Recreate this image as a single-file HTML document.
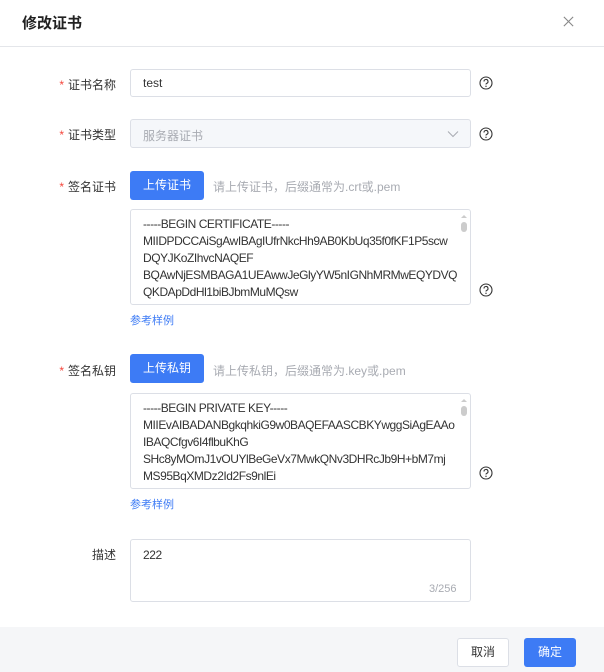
<!DOCTYPE html>
<html><head><meta charset="utf-8"><style>
*{box-sizing:border-box;margin:0;padding:0}
body{width:604px;height:672px;background:#fff;font-family:"Liberation Sans","Noto Sans CJK SC",sans-serif;font-size:12px;color:#333;position:relative;overflow:hidden}
.abs{position:absolute}
.title{left:22px;top:12px;font-size:15px;font-weight:bold;color:#222}
.close{left:562px;top:15px;width:13px;height:13px}
.hr{left:0;top:46px;width:604px;height:1px;background:#e4e6ea}
.lbl{width:116px;left:0;text-align:right;font-size:12px;color:#333}
.lbl b{color:#f5463c;font-weight:normal;margin-right:4px}
.inp{left:130px;width:341px;border:1px solid #dcdfe6;border-radius:3px;background:#fff}
.q{left:479px;width:14px;height:14px}
.btn{left:130px;width:74px;height:29px;background:#3d7bf5;color:#fff;border-radius:3px;text-align:center;line-height:29px;font-size:12px}
.hint{left:213px;color:#a8abb2;font-size:12px}
.ta{padding:6px 12px 0 12px;line-height:17px;font-size:12px;letter-spacing:-0.45px;color:#333;overflow:hidden;white-space:nowrap}
.link{left:130px;color:#3d7bf5;font-size:11px}
.sb{position:absolute;right:1px;top:1px;width:10px;bottom:14px}
.foot{left:0;top:627px;width:604px;height:45px;background:#f5f6f8}
</style></head><body>
<div class="abs title">修改证书</div>
<svg class="abs close" viewBox="0 0 14 14"><path d="M2 2L12 12M12 2L2 12" stroke="#888" stroke-width="1.2"/></svg>
<div class="abs hr"></div>

<div class="abs lbl" style="top:76px"><b>*</b>证书名称</div>
<div class="abs inp" style="top:69px;height:28px;padding:6px 12px">test</div>
<svg class="abs q" style="top:76px" viewBox="0 0 14 14"><circle cx="7" cy="7" r="6" fill="none" stroke="#333" stroke-width="1.1"/><path d="M5 5.5a2 2 0 1 1 2.6 1.9c-.5.2-.6.5-.6 1.1" fill="none" stroke="#333" stroke-width="1.1"/><circle cx="7" cy="10.3" r=".7" fill="#333"/></svg>

<div class="abs lbl" style="top:126px"><b>*</b>证书类型</div>
<div class="abs inp" style="top:119px;height:29px;background:#f5f7fa;padding:7px 12px;color:#a8abb2">服务器证书</div>
<svg class="abs" style="left:447px;top:130px" width="12" height="8" viewBox="0 0 12 8"><path d="M1 1.5L6 6.5L11 1.5" fill="none" stroke="#a8abb2" stroke-width="1"/></svg>
<svg class="abs q" style="top:127px" viewBox="0 0 14 14"><circle cx="7" cy="7" r="6" fill="none" stroke="#333" stroke-width="1.1"/><path d="M5 5.5a2 2 0 1 1 2.6 1.9c-.5.2-.6.5-.6 1.1" fill="none" stroke="#333" stroke-width="1.1"/><circle cx="7" cy="10.3" r=".7" fill="#333"/></svg>

<div class="abs lbl" style="top:178px"><b>*</b>签名证书</div>
<div class="abs btn" style="top:171px">上传证书</div>
<div class="abs hint" style="top:178px">请上传证书，后缀通常为.crt或.pem</div>
<div class="abs inp ta" style="top:209px;height:96px">-----BEGIN CERTIFICATE-----<br>MIIDPDCCAiSgAwIBAgIUfrNkcHh9AB0KbUq35f0fKF1P5scw<br>DQYJKoZIhvcNAQEF<br>BQAwNjESMBAGA1UEAwwJeGlyYW5nIGNhMRMwEQYDVQ<br>QKDApDdHl1biBJbmMuMQsw<br>CQYDVQQGEwJDTjAeFw0yNTA4MjYwNjA5MDBaFw0yNjA4<div class="sb"><div style="margin:4px auto 0;width:0;border:3px solid transparent;border-bottom-color:#ccc;border-top:0"></div><div style="margin:4px auto;width:6px;height:10px;background:#ccc;border-radius:3px"></div></div></div>
<svg class="abs q" style="top:283px" viewBox="0 0 14 14"><circle cx="7" cy="7" r="6" fill="none" stroke="#333" stroke-width="1.1"/><path d="M5 5.5a2 2 0 1 1 2.6 1.9c-.5.2-.6.5-.6 1.1" fill="none" stroke="#333" stroke-width="1.1"/><circle cx="7" cy="10.3" r=".7" fill="#333"/></svg>
<div class="abs link" style="top:312px">参考样例</div>

<div class="abs lbl" style="top:362px"><b>*</b>签名私钥</div>
<div class="abs btn" style="top:354px">上传私钥</div>
<div class="abs hint" style="top:362px">请上传私钥，后缀通常为.key或.pem</div>
<div class="abs inp ta" style="top:393px;height:96px">-----BEGIN PRIVATE KEY-----<br>MIIEvAIBADANBgkqhkiG9w0BAQEFAASCBKYwggSiAgEAAo<br>IBAQCfgv6I4flbuKhG<br>SHc8yMOmJ1vOUYlBeGeVx7MwkQNv3DHRcJb9H+bM7mj<br>MS95BqXMDz2Id2Fs9nlEi<br>SQEuhWE3m88KCD9OaMaSuKeOUHc6nVXCBlSiE+sQeZe<div class="sb"><div style="margin:4px auto 0;width:0;border:3px solid transparent;border-bottom-color:#ccc;border-top:0"></div><div style="margin:4px auto;width:6px;height:10px;background:#ccc;border-radius:3px"></div></div></div>
<svg class="abs q" style="top:466px" viewBox="0 0 14 14"><circle cx="7" cy="7" r="6" fill="none" stroke="#333" stroke-width="1.1"/><path d="M5 5.5a2 2 0 1 1 2.6 1.9c-.5.2-.6.5-.6 1.1" fill="none" stroke="#333" stroke-width="1.1"/><circle cx="7" cy="10.3" r=".7" fill="#333"/></svg>
<div class="abs link" style="top:496px">参考样例</div>

<div class="abs lbl" style="top:546px">描述</div>
<div class="abs inp ta" style="top:539px;height:63px;padding-top:7px">222</div>
<div class="abs" style="left:429px;top:583px;color:#a8abb2;font-size:11px">3/256</div>

<div class="abs foot"></div>
<div class="abs" style="left:457px;top:638px;width:52px;height:29px;border:1px solid #dcdfe6;border-radius:3px;background:#fff;text-align:center;line-height:27px">取消</div>
<div class="abs" style="left:524px;top:638px;width:52px;height:29px;border-radius:3px;background:#3d7bf5;color:#fff;text-align:center;line-height:29px">确定</div>
</body></html>
